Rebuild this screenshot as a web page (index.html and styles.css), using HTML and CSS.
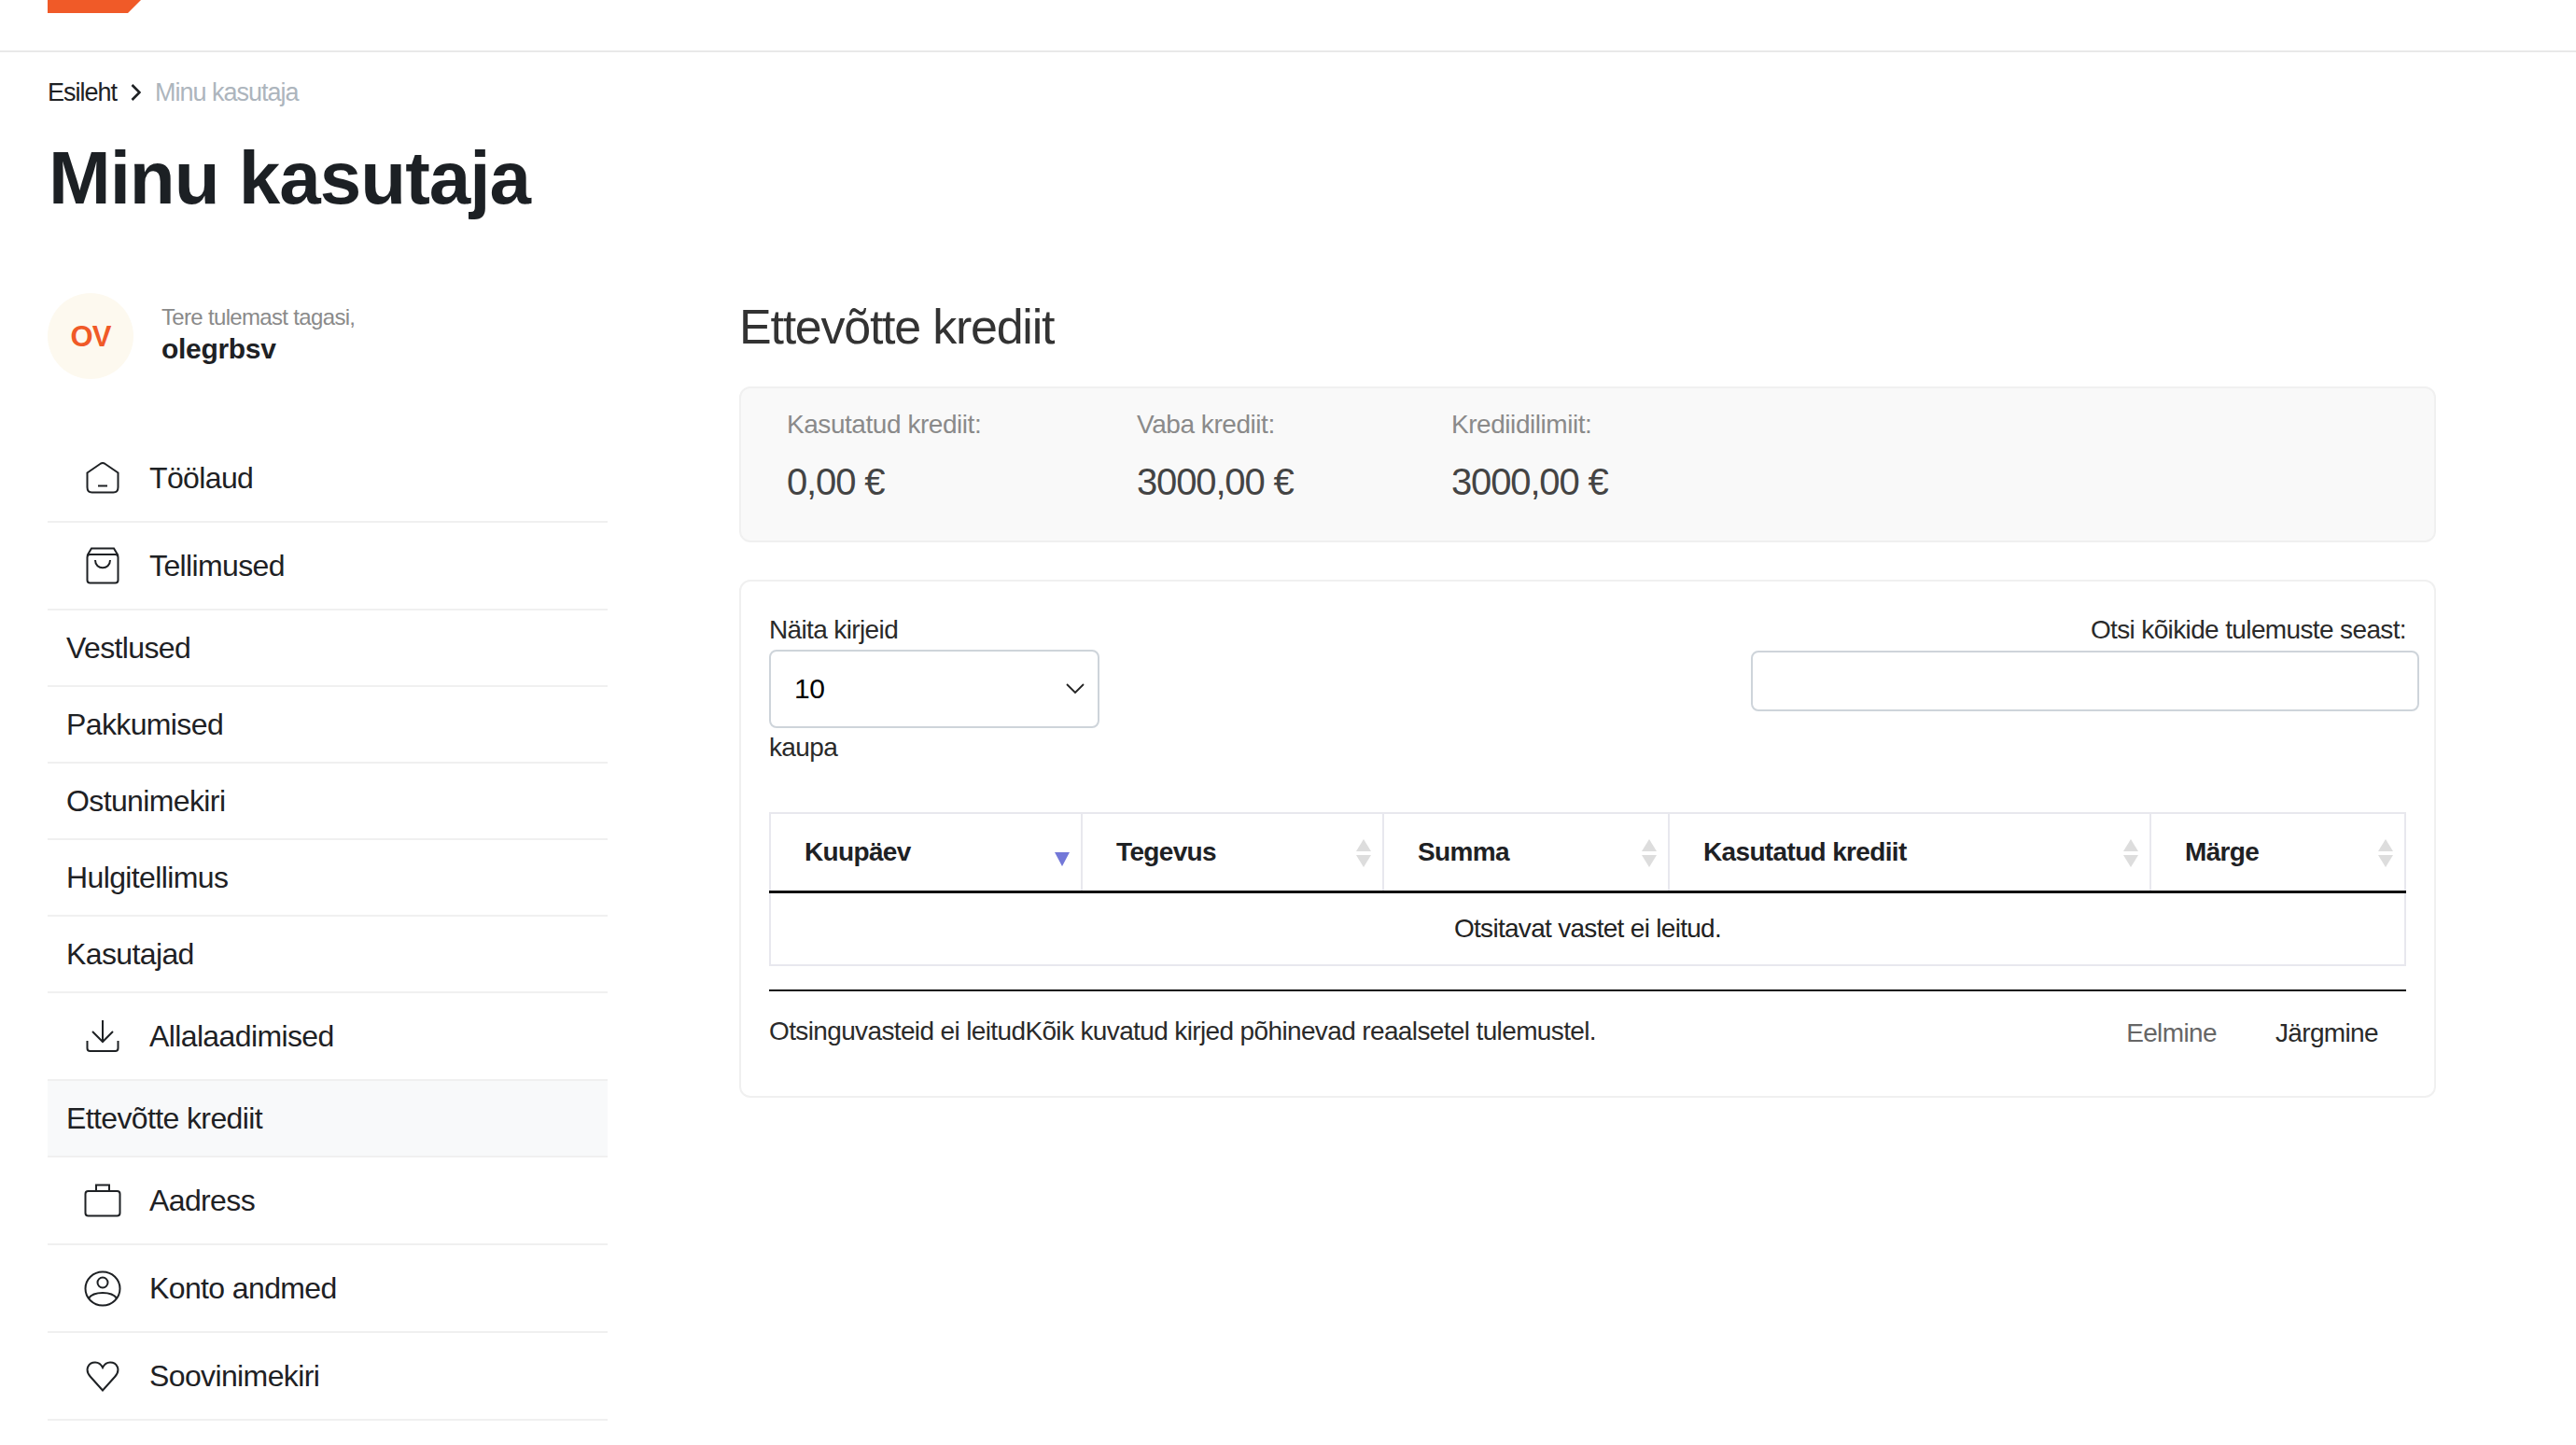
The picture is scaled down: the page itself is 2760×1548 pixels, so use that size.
FILE: index.html
```html
<!DOCTYPE html>
<html lang="et">
<head>
<meta charset="utf-8">
<title>Minu kasutaja</title>
<link rel="stylesheet" href="styles.css">
</head>
<body>
<header class="topbar"><div class="logo"></div></header>
<div class="page">
  <nav class="crumbs"><span class="crumb">Esileht</span>
    <svg class="crumb-sep" viewBox="0 0 11 18"><path d="M1.500 1l8 8-8 8"/></svg>
    <span class="crumb-current">Minu kasutaja</span></nav>
  <h1 class="title">Minu kasutaja</h1>
  <div class="columns">
    <aside class="sidebar">
      <div class="user">
        <div class="avatar">OV</div>
        <div class="user-text"><div class="welcome">Tere tulemast tagasi,</div><div class="username">olegrbsv</div></div>
      </div>
      <ul class="menu">
        <li class="item with-icon"><svg class="icon i-home" viewBox="0 0 36 34"><path d="M1.500 11.500L16 1.500q2-1 4 0L34.500 11.500V27q0 5.500-5 5.500H6.500q-5 0-5-5.500z"/><path d="M13 25.500h10"/></svg>Töölaud</li>
        <li class="item with-icon"><svg class="icon i-bag" viewBox="0 0 36 40"><rect x="1.500" y="8" width="33" height="30.500" rx="3"/><path d="M1.500 9L6 1.500H30L34.500 9"/><path d="M10 14c0 11 16 11 16 0"/></svg>Tellimused</li>
        <li class="item">Vestlused</li>
        <li class="item">Pakkumised</li>
        <li class="item">Ostunimekiri</li>
        <li class="item">Hulgitellimus</li>
        <li class="item">Kasutajad</li>
        <li class="item with-icon"><svg class="icon i-down" viewBox="0 0 36 35"><path d="M18 0v23M7 12l11 11 11-11"/><path d="M1.500 22v8q0 3 3 3h27q3 0 3-3v-8"/></svg>Allalaadimised</li>
        <li class="item active">Ettevõtte krediit</li>
        <li class="item with-icon"><svg class="icon wide i-case" viewBox="0 0 40 36"><rect x="1.500" y="8" width="37" height="26.500" rx="3"/><path d="M13 8V1.500h14V8"/></svg>Aadress</li>
        <li class="item with-icon"><svg class="icon wide i-user" viewBox="0 0 40 39"><ellipse cx="20" cy="19.500" rx="18.500" ry="18"/><circle cx="20" cy="13" r="5.500"/><path d="M5 30c5-8 25-8 30 0"/></svg>Konto andmed</li>
        <li class="item with-icon"><svg class="icon i-heart" viewBox="0 0 36 33"><path d="M18 31.500L5 17C-2 9 3 1.500 10 1.500c4 0 6.500 2.500 8 5.500 1.500-3 4-5.500 8-5.500 7 0 12 7.500 5 15.500z"/></svg>Soovinimekiri</li>
      </ul>
    </aside>
    <main class="content">
      <h2 class="section-title">Ettevõtte krediit</h2>
      <section class="stats">
        <div class="stat stat-a"><div class="stat-label">Kasutatud krediit:</div><div class="stat-value">0,00 €</div></div>
        <div class="stat stat-b"><div class="stat-label">Vaba krediit:</div><div class="stat-value">3000,00 €</div></div>
        <div class="stat"><div class="stat-label">Krediidilimiit:</div><div class="stat-value">3000,00 €</div></div>
      </section>
      <section class="card">
        <div class="toolbar">
          <div class="length">
            <div class="txt">Näita kirjeid</div>
            <div class="select"><span>10</span><svg class="chevron" viewBox="0 0 20 12"><path d="M1 1l9 9 9-9"/></svg></div>
            <div class="txt">kaupa</div>
          </div>
          <div class="search">
            <label class="txt" for="q">Otsi kõikide tulemuste seast:</label>
            <input id="q" class="search-input" type="text">
          </div>
        </div>
        <table class="table">
          <colgroup><col class="c1"><col class="c2"><col class="c3"><col class="c4"><col class="c5"></colgroup>
          <thead><tr>
            <th>Kuupäev<span class="sort-active"></span></th>
            <th>Tegevus<span class="sort"></span></th>
            <th>Summa<span class="sort"></span></th>
            <th>Kasutatud krediit<span class="sort"></span></th>
            <th>Märge<span class="sort"></span></th>
          </tr></thead>
          <tbody><tr><td colspan="5">Otsitavat vastet ei leitud.</td></tr></tbody>
        </table>
        <div class="footer">
          <div class="info">Otsinguvasteid ei leitudKõik kuvatud kirjed põhinevad reaalsetel tulemustel.</div>
          <div class="pager"><span class="prev">Eelmine</span><span class="next">Järgmine</span></div>
        </div>
      </section>
    </main>
  </div>
</div>
</body>
</html>
```
FILE: styles.css
```css
* { box-sizing: border-box; }
html, body { margin: 0; background: #fff; }
body {
  font-family: "Liberation Sans", Arial, sans-serif;
  color: #1e2124;
  height: 1548px;
  overflow: hidden;
}
.topbar { height: 56px; border-bottom: 2px solid #e9e9e9; padding-left: 51px; }
.logo {
  width: 100px; height: 14px; background: #f05a28;
  clip-path: polygon(0 0, 100% 0, 86% 100%, 0 100%);
}
.page { padding: 0 150px 0 51px; }
.crumbs { display: flex; align-items: center; height: 40px; margin-top: 23px; font-size: 27px; letter-spacing: -1px; }
.crumb-sep { width: 11px; height: 18px; margin: 0 15px 0 15px; fill: none; stroke: #1e2124; stroke-width: 2.600; }
.crumb-current { color: #adb5bd; }
.title { margin: 24px 0 0 1px; font-size: 80px; line-height: 96px; font-weight: 700; letter-spacing: -1px; color: #1c2024; }
.columns { display: flex; gap: 141px; margin-top: 34px; }
.sidebar { width: 600px; flex: none; padding-top: 41px; }
.user { display: flex; align-items: center; gap: 30px; height: 92px; }
.avatar {
  width: 92px; height: 92px; border-radius: 50%; background: #fdf9ef; color: #f05a28;
  display: flex; align-items: center; justify-content: center; font-size: 31px; font-weight: 700; letter-spacing: -1px;
  padding-top: 1px;
}
.user-text { padding-bottom: 3px; }
.welcome { font-size: 24px; line-height: 31px; color: #8a8a8a; letter-spacing: -0.670px; }
.username { font-size: 30px; line-height: 38px; font-weight: 700; letter-spacing: -0.300px; }
.menu { list-style: none; margin: 60px 0 0; padding: 0; }
.item {
  display: flex; align-items: center; height: 82px; padding-left: 20px;
  border-bottom: 2px solid #f0f0f0; font-size: 32px; letter-spacing: -0.620px;
}
.item.with-icon { height: 94px; padding-left: 41px; }
.item.active { background: #f8f9fa; }
.icon { width: 36px; margin-right: 32px; fill: none; stroke: #1e2124; stroke-width: 2; flex: none; }
.icon.wide { width: 40px; margin: 0 30px 0 -2px; }
.i-home { height: 34px; }
.i-bag { height: 40px; }
.i-down { height: 35px; }
.i-case { height: 36px; }
.i-user { height: 39px; }
.i-heart { height: 33px; }
.content { flex: 1; min-width: 0; padding-top: 37px; }
.section-title { margin: 0; padding-top: 8px; font-size: 52px; line-height: 64px; font-weight: 400; letter-spacing: -1.250px; color: #333; }
.stats {
  display: flex; height: 167px; margin-top: 32px; padding: 21px 0 0 49px;
  background: #f9f9f9; border: 2px solid #f0f0f0; border-radius: 12px;
}
.stat-a { width: 375px; }
.stat-b { width: 337px; }
.stat-label { font-size: 28px; line-height: 36px; color: #8a8a8a; letter-spacing: -0.450px; }
.stat-value { margin-top: 18px; font-size: 40px; line-height: 50px; color: #444; letter-spacing: -1.150px; }
.card {
  height: 555px; margin-top: 40px; padding: 32px 30px 0;
  border: 2px solid #f0f0f0; border-radius: 12px;
}
.toolbar { display: flex; justify-content: space-between; }
.txt { display: block; font-size: 28px; line-height: 40px; letter-spacing: -0.630px; color: #2a2a2a; }
.select {
  position: relative; display: flex; align-items: center; width: 354px; height: 84px; margin: 1px 0;
  padding-left: 25px; border: 2px solid #ced4da; border-radius: 8px; font-size: 30px; color: #000;
  letter-spacing: -0.500px;
}
.chevron { position: absolute; right: 14px; top: 34px; width: 20px; height: 12px; fill: none; stroke: #222; stroke-width: 1.800; }
.search { display: flex; flex-direction: column; align-items: flex-end; }
.search-input {
  display: block; width: 716px; height: 65px; margin: 2px -14px 0 0; padding: 0;
  border: 2px solid #ced4da; border-radius: 8px; background: #fff;
}
.table { width: 100%; margin-top: 49px; border-collapse: collapse; table-layout: fixed; }
.c1 { width: 334px; } .c2 { width: 323px; } .c3 { width: 306px; } .c4 { width: 516px; }
.table th {
  position: relative; height: 84px; padding: 0 0 0 36px; text-align: left;
  font-size: 28px; font-weight: 700; letter-spacing: -0.650px; color: #1e2124;
  border: 2px solid #e8e8ee; border-bottom: 3px solid #111;
}
.table td {
  height: 79px; text-align: center; font-size: 28px; letter-spacing: -0.700px; color: #222;
  border: 2px solid #e8e8ee; border-top: 0;
}
.sort, .sort-active { position: absolute; right: 12px; width: 16px; }
.sort { top: 27px; height: 30px; }
.sort::before, .sort::after { content: ""; position: absolute; left: 0; width: 16px; height: 13px; background: #ddd; }
.sort::before { top: 0; clip-path: polygon(50% 0, 100% 100%, 0 100%); }
.sort::after { bottom: 0; clip-path: polygon(0 0, 100% 0, 50% 100%); }
.sort-active {
  top: 41px; height: 15px; background: #7378d8;
  clip-path: polygon(0 0, 100% 0, 50% 100%);
}
.footer {
  display: flex; justify-content: space-between; align-items: center; height: 88px; margin-top: 25px;
  border-top: 2px solid #111; font-size: 28px; letter-spacing: -0.630px; color: #2a2a2a;
}
.pager { display: flex; gap: 63px; padding-right: 30px; padding-top: 3px; }
.prev { color: #666; margin-left: -2px; }
```
